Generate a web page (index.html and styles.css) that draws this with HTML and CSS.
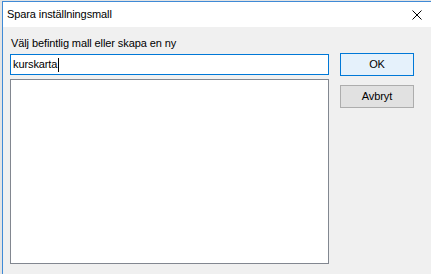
FILE: index.html
```html
<!DOCTYPE html>
<html lang="sv">
<head>
<meta charset="utf-8">
<title>Spara inställningsmall</title>
<link rel="stylesheet" href="styles.css">
</head>
<body>
<div class="screen">
  <div class="dialog">
    <div class="titlebar">
      <span class="title">Spara inställningsmall</span>
      <svg class="close" width="10" height="10" viewBox="0 0 10 10"><path d="M0.5 0.5 L9.5 9.5 M9.5 0.5 L0.5 9.5" stroke="#000" stroke-width="1" fill="none"/></svg>
    </div>
    <div class="content">
      <div class="main">
        <div class="label">Välj befintlig mall eller skapa en ny</div>
        <div class="field"><span class="value">kurskarta</span><span class="caret"></span></div>
        <div class="list"></div>
      </div>
      <div class="buttons">
        <div class="btn btn-default">OK</div>
        <div class="btn btn-cancel">Avbryt</div>
      </div>
    </div>
  </div>
</div>
</body>
</html>
```
FILE: styles.css
```css
html, body {
  margin: 0;
  padding: 0;
}
body {
  width: 431px;
  height: 274px;
  overflow: hidden;
  background: #e4e4e4;
  font-family: "Liberation Sans", Arial, sans-serif;
  font-size: 11px;
  letter-spacing: -0.1px;
  color: #000;
}
.screen {
  display: flex;
  flex-direction: column;
  height: 274px;
  padding: 1px 0 0 2px;
  box-sizing: border-box;
}
.dialog {
  flex: 1;
  display: flex;
  flex-direction: column;
  border-top: 1px solid #3f8ad6;
  border-left: 1px solid #3f8ad6;
  background: #f0f0f0;
}
.titlebar {
  height: 25px;
  box-sizing: border-box;
  background: #fff;
  display: flex;
  align-items: center;
  justify-content: space-between;
  padding: 0 9px 1px 4px;
}
.title {
  font-size: 11px;
  line-height: 15px;
}
.close {
  display: block;
  margin-top: 1px;
}
.content {
  display: flex;
  padding: 9px 0 0 7px;
}
.main {
  width: 319px;
  display: flex;
  flex-direction: column;
}
.label {
  line-height: 15px;
  height: 15px;
  padding-left: 1px;
}
.field {
  margin-top: 3px;
  height: 21px;
  box-sizing: border-box;
  border: 1px solid #0078d7;
  background: #fff;
  display: flex;
  align-items: center;
  padding-left: 2px;
}
.value {
  line-height: 15px;
}
.caret {
  width: 1px;
  height: 14px;
  margin-left: 1px;
  background: #000;
}
.list {
  margin-top: 4px;
  height: 185px;
  box-sizing: border-box;
  border: 1px solid #828790;
  background: #fff;
}
.buttons {
  margin-left: 11px;
  padding-top: 17px;
  width: 74px;
  display: flex;
  flex-direction: column;
  gap: 9px;
}
.btn {
  height: 23px;
  box-sizing: border-box;
  display: flex;
  align-items: center;
  justify-content: center;
  line-height: 15px;
}
.btn-default {
  border: 1px solid #0078d7;
  background: #e5f1fb;
}
.btn-cancel {
  border: 1px solid #adadad;
  background: #e1e1e1;
}
```
